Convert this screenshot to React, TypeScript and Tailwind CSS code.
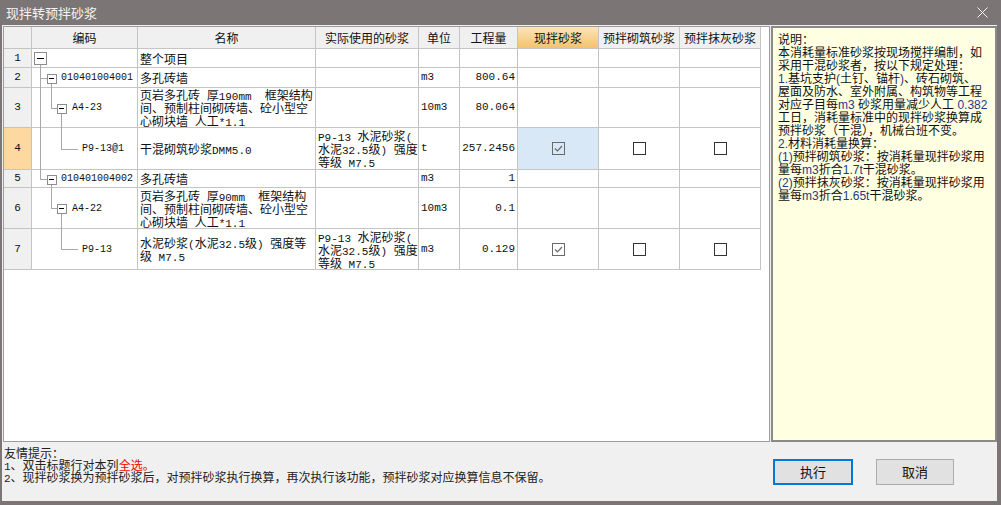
import React from "react";

const MONO = "font-['Liberation_Mono',monospace] text-[11px]";
const CODE = "font-['Liberation_Mono',monospace] text-[10px]";
const NOTE_LATIN = "font-['Liberation_Sans',sans-serif] text-[#1f3a86]";

function Mixed({ text, latin }: { text: string; latin: string }) {
  const parts = text.split(/([\x20-\x7e]+)/).filter(Boolean);
  return (
    <>
      {parts.map((p, i) =>
        /^[\x20-\x7e]+$/.test(p) ? (
          <span key={i} className={latin}>
            {p}
          </span>
        ) : (
          <span key={i}>{p}</span>
        )
      )}
    </>
  );
}

function Check({ checked, soft }: { checked?: boolean; soft?: boolean }) {
  return (
    <svg width="13" height="13" viewBox="0 0 13 13" shapeRendering="crispEdges">
      <rect x="0.5" y="0.5" width="12" height="12" fill="none" stroke={soft ? "#6a6a6a" : "#333"} />
      {checked && (
        <path d="M3 6.5 L5.5 9 L10 4" fill="none" stroke="#6a6a6a" strokeWidth="1.2" shapeRendering="auto" />
      )}
    </svg>
  );
}

type Row = {
  n: number;
  h: string;
  code: string;
  pad: string;
  name: string[];
  actual: string[];
  unit: string;
  qty: string;
  checks?: boolean;
  selected?: boolean;
};

const rows: Row[] = [
  { n: 1, h: "h-[19px]", code: "", pad: "pl-[29px]", name: ["整个项目"], actual: [], unit: "", qty: "" },
  { n: 2, h: "h-[20px]", code: "010401004001", pad: "pl-[29px]", name: ["多孔砖墙"], actual: [], unit: "m3", qty: "800.64" },
  {
    n: 3,
    h: "h-[40px]",
    code: "A4-23",
    pad: "pl-[40px]",
    name: ["页岩多孔砖 厚190mm  框架结构", "间、预制柱间砌砖墙、砼小型空", "心砌块墙 人工*1.1"],
    actual: [],
    unit: "10m3",
    qty: "80.064",
  },
  {
    n: 4,
    h: "h-[42px]",
    code: "P9-13@1",
    pad: "pl-[50px]",
    name: ["干混砌筑砂浆DMM5.0"],
    actual: ["P9-13 水泥砂浆(", "水泥32.5级) 强度", "等级 M7.5"],
    unit: "t",
    qty: "257.2456",
    checks: true,
    selected: true,
  },
  { n: 5, h: "h-[18px]", code: "010401004002", pad: "pl-[29px]", name: ["多孔砖墙"], actual: [], unit: "m3", qty: "1" },
  {
    n: 6,
    h: "h-[41px]",
    code: "A4-22",
    pad: "pl-[40px]",
    name: ["页岩多孔砖 厚90mm  框架结构", "间、预制柱间砌砖墙、砼小型空", "心砌块墙 人工*1.1"],
    actual: [],
    unit: "10m3",
    qty: "0.1",
  },
  {
    n: 7,
    h: "h-[41px]",
    code: "P9-13",
    pad: "pl-[50px]",
    name: ["水泥砂浆(水泥32.5级) 强度等", "级 M7.5"],
    actual: ["P9-13 水泥砂浆(", "水泥32.5级) 强度", "等级 M7.5"],
    unit: "m3",
    qty: "0.129",
    checks: true,
  },
];

const COLS = "grid grid-cols-[28px_106px_178px_103px_41px_58px_81px_81px_81px] grid-rows-[100%]";
const CELL = "border-r border-b border-[#c4c4c4] flex items-center min-h-0";

const notes = [
  "说明：",
  "本消耗量标准砂浆按现场搅拌编制，如",
  "采用干混砂浆者，按以下规定处理：",
  "1.基坑支护(土钉、锚杆)、砖石砌筑、",
  "屋面及防水、室外附属、构筑物等工程",
  "对应子目每m3 砂浆用量减少人工 0.382",
  "工日，消耗量标准中的现拌砂浆换算成",
  "预拌砂浆（干混），机械台班不变。",
  "2.材料消耗量换算：",
  "(1)预拌砌筑砂浆：按消耗量现拌砂浆用",
  "量每m3折合1.7t干混砂浆。",
  "(2)预拌抹灰砂浆：按消耗量现拌砂浆用",
  "量每m3折合1.65t干混砂浆。",
];

function Tree() {
  return (
    <svg
      width="106"
      height="221"
      className="absolute left-[28px] top-0 pointer-events-none"
      shapeRendering="crispEdges"
    >
      <g stroke="#a8a8a8" fill="none">
        <path d="M8.5 15.5 V130.5 M8.5 29.5 H15 M8.5 130.5 H15" />
        <path d="M19.5 34 V59.5 M19.5 59.5 H25 M19.5 135 V159.5 M19.5 159.5 H25" />
        <path d="M29.5 64 V100.5 H46 M29.5 164 V200.5 H46" />
      </g>
      <g stroke="#8c8c8c" fill="#fff">
        <rect x="2.5" y="3.5" width="12" height="12" />
        <rect x="15" y="25" width="9" height="9" />
        <rect x="25" y="55" width="9" height="9" />
        <rect x="15" y="126" width="9" height="9" />
        <rect x="25" y="155" width="9" height="9" />
      </g>
      <g stroke="#000" fill="none">
        <path d="M5 9.5 H12 M17 29.5 H22 M27 59.5 H32 M17 130.5 H22 M27 159.5 H32" />
      </g>
    </svg>
  );
}

function Lines({ lines }: { lines: string[] }) {
  return (
    <div className="flex flex-col">
      {lines.map((l, i) => (
        <div key={i} className="h-[13px] leading-[13px] whitespace-pre">
          <Mixed text={l} latin={MONO} />
        </div>
      ))}
    </div>
  );
}

export default function App() {
  return (
    <div className="w-[1001px] h-[505px] bg-[#7b7675] flex flex-col overflow-hidden font-['Noto_Sans_CJK_SC',sans-serif] text-[#111]">
      {/* title bar */}
      <div className="h-[25px] flex items-center justify-between pl-[6px] pr-[13px] text-[13px] text-[#f4f4f4]">
        <span>现拌转预拌砂浆</span>
        <svg width="11" height="11" viewBox="0 0 11 11">
          <path d="M0.5 0.5 L10.5 10.5 M10.5 0.5 L0.5 10.5" stroke="#f4f4f4" strokeWidth="1" />
        </svg>
      </div>

      <div className="flex-1 ml-[2px] mr-[4px] mb-[4px] bg-[#f0f0f0] flex flex-col">
        <div className="flex h-[417px] pt-[1px] pl-[1px]">
          {/* grid */}
          <div className="w-[767px] h-full border border-[#9c9c9c] bg-white text-[12px] leading-[13px]">
            <div className={`${COLS} h-[22px] bg-[#f0f0f0] w-[757px]`}>
              <div className={CELL}></div>
              {["编码", "名称", "实际使用的砂浆", "单位", "工程量"].map((t) => (
                <div key={t} className={`${CELL} justify-center`}>
                  {t}
                </div>
              ))}
              <div className={`${CELL} justify-center bg-linear-to-b from-[#fce5b8] to-[#f3c26c]`}>现拌砂浆</div>
              <div className={`${CELL} justify-center`}>预拌砌筑砂浆</div>
              <div className={`${CELL} justify-center`}>预拌抹灰砂浆</div>
            </div>
            <div className="relative w-[757px]">
              {rows.map((r) => (
                <div key={r.n} className={`${COLS} ${r.h}`}>
                  <div
                    className={`${CELL} justify-center ${MONO} ${
                      r.selected ? "bg-[#fdd8a0]" : "bg-[#f0f0f0]"
                    }`}
                  >
                    {r.n}
                  </div>
                  <div className={`${CELL} ${r.pad} ${CODE}`}>{r.code}</div>
                  <div className={`${CELL} pl-[2px]`}>
                    <Lines lines={r.name} />
                  </div>
                  <div className={`${CELL} pl-[2px]`}>
                    <Lines lines={r.actual} />
                  </div>
                  <div className={`${CELL} pl-[2px] ${MONO}`}>{r.unit}</div>
                  <div className={`${CELL} justify-end pr-[2px] ${MONO}`}>{r.qty}</div>
                  <div className={`${CELL} justify-center ${r.selected ? "bg-[#d9e8f7]" : ""}`}>
                    {r.checks && <Check checked soft />}
                  </div>
                  <div className={`${CELL} justify-center`}>{r.checks && <Check />}</div>
                  <div className={`${CELL} justify-center`}>{r.checks && <Check />}</div>
                </div>
              ))}
              <Tree />
            </div>
          </div>

          {/* notes */}
          <div className="ml-[1px] flex-1 h-full border-2 border-[#8a8a8a] bg-[#ffffe1] pl-[5px] pt-[4px] text-[12px]">
            {notes.map((l, i) => (
              <div key={i} className="h-[13px] leading-[13px] whitespace-pre">
                <Mixed text={l} latin={NOTE_LATIN} />
              </div>
            ))}
          </div>
        </div>

        {/* bottom */}
        <div className="flex-1 flex">
          <div className="pl-[2px] pt-[5px] text-[12px] text-[#222]">
            <div className="h-[12px] leading-[12px]">友情提示：</div>
            <div className="h-[12px] leading-[12px]">
              <span className={MONO}>1</span>、双击标题行对本列<span className="text-[#ff0000]">全选。</span>
            </div>
            <div className="h-[12px] leading-[12px]">
              <span className={MONO}>2</span>
              、现拌砂浆换为预拌砂浆后，对预拌砂浆执行换算，再次执行该功能，预拌砂浆对应换算信息不保留。
            </div>
          </div>
          <div className="ml-auto flex items-start gap-[23px] pt-[17px] pr-[43px]">
            <button className="w-[80px] h-[26px] border-2 border-[#0078d7] bg-[#e1e1e1] text-[13px] flex items-center justify-center">
              执行
            </button>
            <button className="w-[78px] h-[26px] border border-[#adadad] bg-[#e1e1e1] text-[13px] flex items-center justify-center">
              取消
            </button>
          </div>
        </div>
      </div>
    </div>
  );
}
